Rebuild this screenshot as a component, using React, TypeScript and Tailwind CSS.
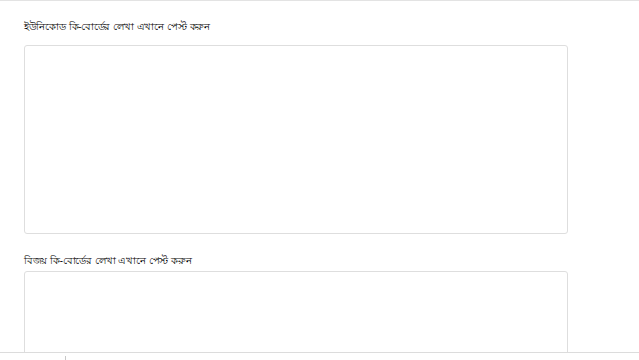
import React from "react";

export default function App() {
  return (
    <div className="w-[639px] h-[360px] overflow-hidden bg-white border-t border-[#e3e3e3] flex flex-col" style={{ fontFamily: '"Noto Sans", "Liberation Sans", sans-serif' }}>
      <div className="flex-1 overflow-hidden pl-6 pr-[71px]">
        <div className="pt-[17px] text-[10px] tracking-[-0.35px] [word-spacing:1px] leading-[16px] text-black">ইউনিকোড কি-বোর্ডের লেখা এখানে পেস্ট করুন</div>
        <textarea className="mt-[11px] block w-full h-[189px] rounded-[3px] border border-[#dedede] resize-none outline-none" />
        <div className="mt-[18px] text-[10px] tracking-[-0.35px] [word-spacing:1px] leading-[16px] text-black">বিজয় কি-বোর্ডের লেখা এখানে পেস্ট করুন</div>
        <textarea className="mt-[3px] block w-full h-[189px] rounded-[3px] border border-[#dedede] resize-none outline-none" />
      </div>
      <div className="h-[8px] shrink-0 border-t border-[#dcdcdc] bg-white pl-[65px] pt-[3px]">
        <div className="w-px h-[4px] bg-[#c8c8c8]" />
      </div>
    </div>
  );
}
